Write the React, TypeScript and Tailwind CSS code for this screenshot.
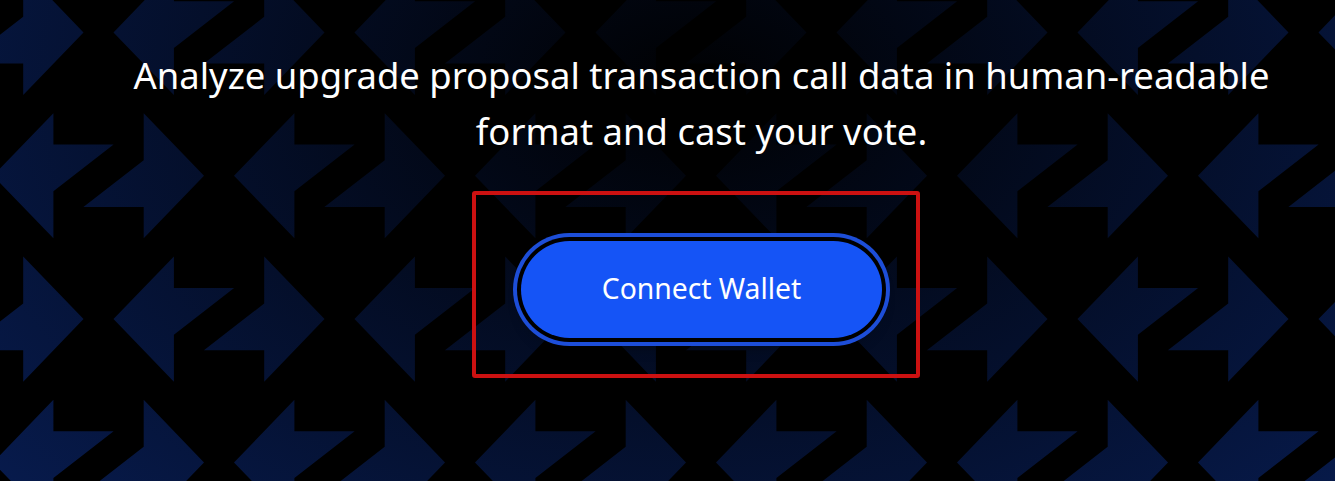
const TILE = 241;
const ROW = 143.35;

const LEFT_ARROW = "l60.4-62.6v31.4h60.2l-60.2 46.8v47z";
const RIGHT_ARROW = "m150.7-62.6l60.3 62.6l-60.3 62.6v-31.4h-60.3l60.3-46.8z";

function ArrowBackdrop() {
  const marks: string[] = [];
  for (let row = 0; row < 4; row++) {
    const start = row % 2 === 0 ? 113.5 - TILE : 234 - TILE;
    for (let col = 0; col < 7; col++) {
      marks.push(`M${start + col * TILE} ${32.4 + row * ROW}${LEFT_ARROW}${RIGHT_ARROW}`);
    }
  }
  return (
    <svg className="absolute inset-0 h-full w-full" viewBox="0 0 1335 481" aria-hidden="true">
      <defs>
        <radialGradient
          id="fade"
          gradientUnits="userSpaceOnUse"
          cx="0"
          cy="0"
          r="1000"
          gradientTransform="translate(695 85) scale(1 0.667)"
        >
          <stop offset="0" stopColor="#1755f4" stopOpacity="0.01" />
          <stop offset="1" stopColor="#1755f4" stopOpacity="0.34" />
        </radialGradient>
      </defs>
      <path fill="url(#fade)" d={marks.join("")} />
    </svg>
  );
}

export default function App() {
  return (
    <main className="relative h-[481px] w-full overflow-hidden bg-black pl-[68px] font-['Noto_Sans',sans-serif] text-white">
      <ArrowBackdrop />
      <div className="relative flex flex-col items-center pt-[47px]">
        <p className="text-center text-[36.45px] leading-14">
          Analyze upgrade proposal transaction call data in human-readable
          <br />
          format and cast your vote.
        </p>
        <div className="relative mt-[82px]">
          <button className="flex h-[97px] w-[361px] items-center justify-center rounded-full bg-[#1554f6] pb-0.5 text-[28.3px] shadow-lg ring-4 shadow-black/40 ring-[#1d4ed8] ring-offset-4 ring-offset-black">
            Connect Wallet
          </button>
          <div className="pointer-events-none absolute -top-[50px] -left-[49px] h-[187px] w-[448px] rounded-[3px] border-[4px] border-[#cc1111]" />
        </div>
      </div>
    </main>
  );
}
